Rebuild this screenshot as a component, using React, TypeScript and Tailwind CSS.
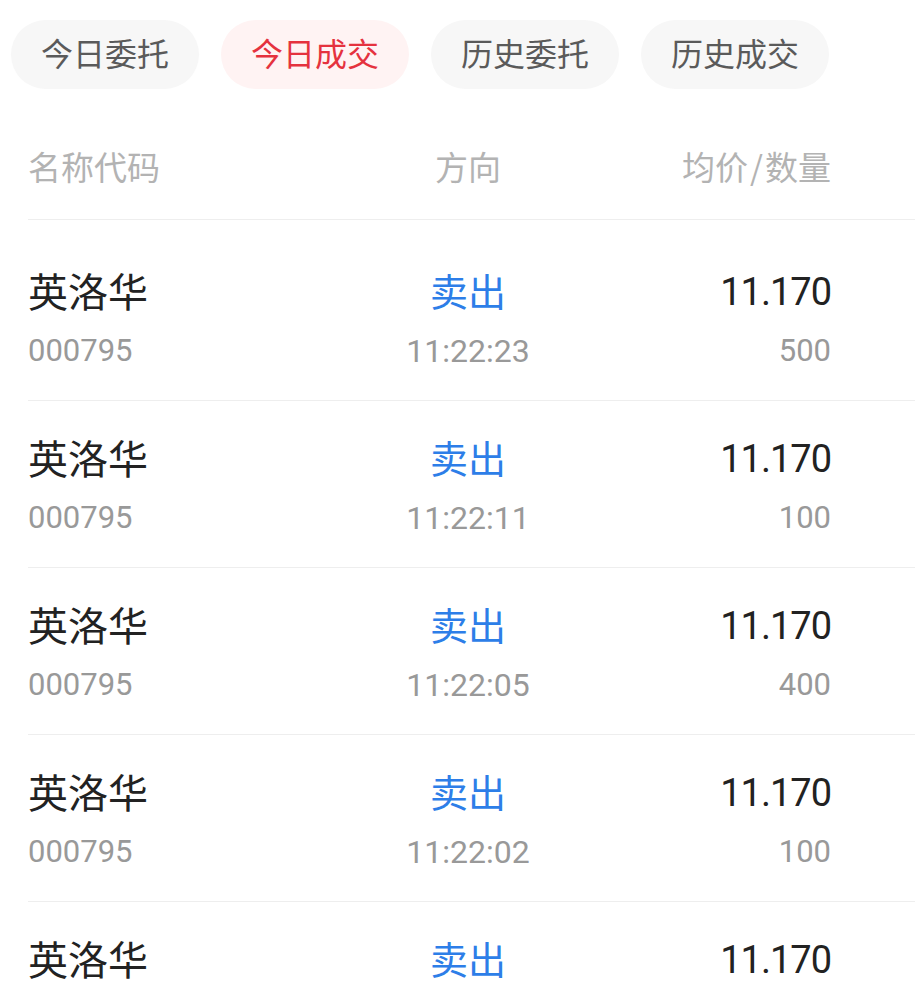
const trades = [
  { name: "英洛华", code: "000795", side: "卖出", time: "11:22:23", price: "11.170", qty: "500" },
  { name: "英洛华", code: "000795", side: "卖出", time: "11:22:11", price: "11.170", qty: "100" },
  { name: "英洛华", code: "000795", side: "卖出", time: "11:22:05", price: "11.170", qty: "400" },
  { name: "英洛华", code: "000795", side: "卖出", time: "11:22:02", price: "11.170", qty: "100" },
  { name: "英洛华", code: "000795", side: "卖出", time: "11:21:58", price: "11.170", qty: "200" },
];

const tabs = ["今日委托", "今日成交", "历史委托", "历史成交"];

const cjk = "font-['Noto_Sans_CJK_SC',sans-serif]";
const num = "font-['Roboto','Noto_Sans_CJK_SC',sans-serif]";

export default function App() {
  return (
    <main className={`h-[1005px] w-[915px] overflow-hidden bg-white ${cjk}`}>
      <nav className="flex gap-[22px] pl-[11px] pt-[20px]">
        {tabs.map((tab, i) => (
          <button
            key={tab}
            className={
              i === 1
                ? "flex h-[69px] w-[188px] items-center justify-center rounded-full bg-[#fff3f3] pb-[6px] text-[32px] text-[#e5323e]"
                : "flex h-[69px] w-[188px] items-center justify-center rounded-full bg-[#f7f7f7] pb-[6px] text-[32px] text-[#5a5a5a]"
            }
          >
            {tab}
          </button>
        ))}
      </nav>

      <div className="pl-[28px]">
        <div className="grid h-[131px] grid-cols-[300px_280px_223px] items-start border-b border-[#eeeeee] pt-[59px] text-[33px] leading-[36px] text-[#b3b3b3]">
          <span>名称代码</span>
          <span className="text-center">方向</span>
          <span className="text-right">
            均价<span className="mx-[2px]">/</span>数量
          </span>
        </div>

        <div className="pt-[14px]">
          {trades.map((t, i) => (
            <div
              key={i}
              className="grid h-[167px] grid-cols-[300px_280px_223px] border-b border-[#eeeeee] pt-[34px]"
            >
              <div className="flex flex-col gap-[21px]">
                <span className="text-[40px] leading-[44px] text-[#222222]">{t.name}</span>
                <span className={`${num} text-[31px] leading-[36px] text-[#999999]`}>{t.code}</span>
              </div>
              <div className="flex flex-col items-center gap-[21px]">
                <span className="text-[38px] leading-[44px] text-[#2d7ee8]">{t.side}</span>
                <span className={`${num} text-[32px] leading-[36px] text-[#999999]`}>{t.time}</span>
              </div>
              <div className="flex flex-col items-end gap-[21px]">
                <span className={`${num} pt-[5px] text-[38px] leading-[39px] tracking-[-1px] text-[#222222]`}>
                  {t.price}
                </span>
                <span className={`${num} text-[31px] leading-[36px] text-[#999999]`}>{t.qty}</span>
              </div>
            </div>
          ))}
        </div>
      </div>
    </main>
  );
}
